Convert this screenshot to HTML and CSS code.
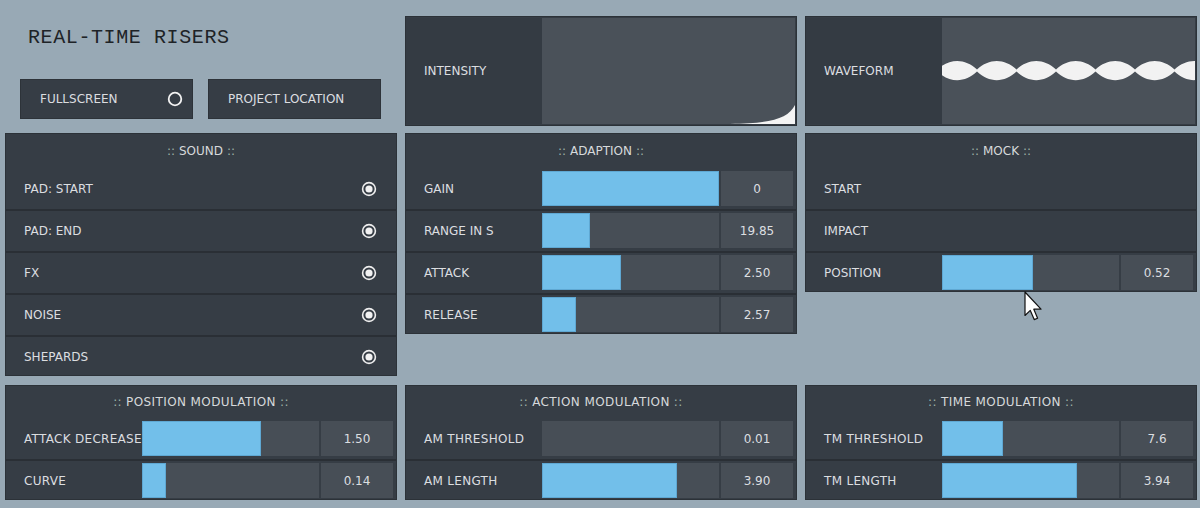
FILE: index.html
```html
<!DOCTYPE html>
<html>
<head>
<meta charset="utf-8">
<link rel="stylesheet" href="styles.css">
</head>
<body>
<div class="app">
  <div class="row-top">
    <div class="brand">
      <h1 class="title">REAL-TIME RISERS</h1>
      <div class="buttons">
        <div class="btn"><span>FULLSCREEN</span>
          <svg class="ring" width="16" height="16" viewBox="0 0 16 16"><circle cx="8" cy="8" r="6.3" fill="none" stroke="#f2f2f2" stroke-width="1.8"/></svg>
        </div>
        <div class="btn"><span>PROJECT LOCATION</span></div>
      </div>
    </div>
    <div class="panel viz">
      <div class="viz-label">INTENSITY</div>
      <div class="viz-graph">
        <svg class="graph-svg" viewBox="0 0 253 106" preserveAspectRatio="none">
          <path d="M188 106 C 228 105.5 246 101 253 87 V106 Z" fill="#f4f4f4"/>
        </svg>
      </div>
    </div>
    <div class="panel viz">
      <div class="viz-label">WAVEFORM</div>
      <div class="viz-graph">
        <svg class="graph-svg" viewBox="0 0 253 106" preserveAspectRatio="none">
          <path d="M-4.5 51.5 C7.5 40 23 40 35 51.5 C47 40 62.5 40 74.5 51.5 C86.5 40 102 40 114 51.5 C126 40 141.5 40 153.5 51.5 C165.5 40 181 40 193 51.5 C205 40 220.5 40 232.5 51.5 C244.5 40 260 40 272 51.5 L272 53.5 C260 65 244.5 65 232.5 53.5 C220.5 65 205 65 193 53.5 C181 65 165.5 65 153.5 53.5 C141.5 65 126 65 114 53.5 C102 65 86.5 65 74.5 53.5 C62.5 65 47 65 35 53.5 C23 65 7.5 65 -4.5 53.5 Z" fill="#f2f2f2"/>
        </svg>
      </div>
    </div>
  </div>

  <div class="row-mid">
    <div class="panel">
      <div class="hdr"><span class="c">::</span> SOUND <span class="c">::</span></div>
      <div class="row"><div class="lbl">PAD: START</div><svg class="radio" width="16" height="16" viewBox="0 0 16 16"><circle cx="8" cy="8" r="6.4" fill="none" stroke="#eeeeee" stroke-width="1.6"/><circle cx="8" cy="8" r="3.6" fill="#f2f2f2"/></svg></div>
      <div class="row"><div class="lbl">PAD: END</div><svg class="radio" width="16" height="16" viewBox="0 0 16 16"><circle cx="8" cy="8" r="6.4" fill="none" stroke="#eeeeee" stroke-width="1.6"/><circle cx="8" cy="8" r="3.6" fill="#f2f2f2"/></svg></div>
      <div class="row"><div class="lbl">FX</div><svg class="radio" width="16" height="16" viewBox="0 0 16 16"><circle cx="8" cy="8" r="6.4" fill="none" stroke="#eeeeee" stroke-width="1.6"/><circle cx="8" cy="8" r="3.6" fill="#f2f2f2"/></svg></div>
      <div class="row"><div class="lbl">NOISE</div><svg class="radio" width="16" height="16" viewBox="0 0 16 16"><circle cx="8" cy="8" r="6.4" fill="none" stroke="#eeeeee" stroke-width="1.6"/><circle cx="8" cy="8" r="3.6" fill="#f2f2f2"/></svg></div>
      <div class="row"><div class="lbl">SHEPARDS</div><svg class="radio" width="16" height="16" viewBox="0 0 16 16"><circle cx="8" cy="8" r="6.4" fill="none" stroke="#eeeeee" stroke-width="1.6"/><circle cx="8" cy="8" r="3.6" fill="#f2f2f2"/></svg></div>
    </div>

    <div class="panel">
      <div class="hdr"><span class="c">::</span> ADAPTION <span class="c">::</span></div>
      <div class="row"><div class="lbl">GAIN</div><div class="slider"><div class="fill" style="width:100%"></div></div><div class="val">0</div></div>
      <div class="row"><div class="lbl">RANGE IN S</div><div class="slider"><div class="fill" style="width:27%"></div></div><div class="val">19.85</div></div>
      <div class="row"><div class="lbl">ATTACK</div><div class="slider"><div class="fill" style="width:44.6%"></div></div><div class="val">2.50</div></div>
      <div class="row"><div class="lbl">RELEASE</div><div class="slider"><div class="fill" style="width:19.2%"></div></div><div class="val">2.57</div></div>
    </div>

    <div class="panel">
      <div class="hdr"><span class="c">::</span> MOCK <span class="c">::</span></div>
      <div class="row"><div class="lbl">START</div></div>
      <div class="row"><div class="lbl">IMPACT</div></div>
      <div class="row"><div class="lbl">POSITION</div><div class="slider"><div class="fill" style="width:51.4%"></div></div><div class="val">0.52</div></div>
    </div>
  </div>

  <div class="row-bot">
    <div class="panel">
      <div class="hdr wide"><span class="c">::</span> POSITION MODULATION <span class="c">::</span></div>
      <div class="row wide"><div class="lbl">ATTACK DECREASE</div><div class="slider"><div class="fill" style="width:67.2%"></div></div><div class="val">1.50</div></div>
      <div class="row wide"><div class="lbl">CURVE</div><div class="slider"><div class="fill" style="width:13.6%"></div></div><div class="val">0.14</div></div>
    </div>
    <div class="panel">
      <div class="hdr wide"><span class="c">::</span> ACTION MODULATION <span class="c">::</span></div>
      <div class="row wide"><div class="lbl">AM THRESHOLD</div><div class="slider"><div class="fill" style="width:0%"></div></div><div class="val">0.01</div></div>
      <div class="row wide"><div class="lbl">AM LENGTH</div><div class="slider"><div class="fill" style="width:76.3%"></div></div><div class="val">3.90</div></div>
    </div>
    <div class="panel">
      <div class="hdr wide"><span class="c">::</span> TIME MODULATION <span class="c">::</span></div>
      <div class="row wide"><div class="lbl">TM THRESHOLD</div><div class="slider"><div class="fill" style="width:34.5%"></div></div><div class="val">7.6</div></div>
      <div class="row wide"><div class="lbl">TM LENGTH</div><div class="slider"><div class="fill" style="width:76.3%"></div></div><div class="val">3.94</div></div>
    </div>
  </div>

  <svg class="cursor" width="20" height="31" viewBox="0 0 20 31">
    <path d="M1 1 L1 24.5 L6.3 19.4 L10.2 28.6 L13.6 27.2 L9.8 18.2 L17 18.2 Z" fill="#ffffff" stroke="#111111" stroke-width="1.2" stroke-linejoin="round"/>
  </svg>
</div>
</body>
</html>
```

FILE: styles.css
```css
* {
  box-sizing: border-box;
}

html, body {
  margin: 0;
  padding: 0;
}

body {
  width: 1200px;
  height: 508px;
  overflow: hidden;
  background: #98a9b5;
  font-family: "DejaVu Sans", "Liberation Sans", sans-serif;
  font-size: 12px;
  color: #dcdee0;
}

.app {
  position: relative;
  padding: 16px 0 0 5px;
  display: flex;
  flex-direction: column;
}

.row-top {
  display: flex;
  gap: 8px;
  height: 110px;
}

.row-mid {
  display: flex;
  gap: 8px;
  align-items: flex-start;
  margin-top: 7px;
}

.row-bot {
  display: flex;
  gap: 8px;
  align-items: flex-start;
  margin-top: 9px;
}

.brand {
  width: 392px;
  flex: none;
}

.title {
  margin: 0;
  padding: 12px 0 0 23px;
  font-family: "Liberation Mono", "DejaVu Sans Mono", monospace;
  font-weight: normal;
  font-size: 20px;
  line-height: 20px;
  letter-spacing: 0.6px;
  color: #1e2327;
}

.buttons {
  display: flex;
  gap: 15px;
  margin-top: 31px;
  padding-left: 15px;
}

.btn {
  width: 173px;
  height: 40px;
  background: #363d45;
  border: 1px solid #2d3339;
  display: flex;
  align-items: center;
  justify-content: space-between;
  padding: 0 9px 0 19px;
}

.panel {
  width: 392px;
  flex: none;
  background: #363d45;
  border: 1px solid #2c3238;
}

.viz {
  height: 110px;
  display: flex;
  padding: 1px 1px 1px 0;
}

.viz-label {
  width: 136px;
  display: flex;
  align-items: center;
  padding-left: 18px;
  background: #343b43;
}

.viz-graph {
  flex: 1;
  background: #4a5159;
  position: relative;
}

.graph-svg {
  display: block;
  width: 100%;
  height: 100%;
}

.hdr {
  height: 33px;
  display: flex;
  align-items: center;
  justify-content: center;
  gap: 4px;
  color: #d6d9db;
}

.hdr.wide {
  height: 31px;
  letter-spacing: 0.4px;
}

.hdr .c {
  color: #9fb3a8;
}

.row {
  display: flex;
  align-items: center;
  height: 42px;
  padding: 2px 3px 3px 0;
  border-top: 2px solid #2a2f35;
}

.hdr + .row {
  border-top-color: transparent;
}

.row:last-child {
  height: 40px;
  padding-bottom: 1px;
}

.lbl {
  width: 136px;
  padding-left: 18px;
  white-space: nowrap;
}

.row.wide .lbl {
  letter-spacing: 0.3px;
}

.row .lbl:only-child,
.row .lbl:first-child:nth-last-child(2) {
  flex: 1;
}

.radio {
  margin-right: 16px;
  flex: none;
}

.slider {
  width: 177px;
  height: 35px;
  background: #474e56;
  flex: none;
}

.fill {
  height: 100%;
  background: #72bfea;
  border: 1px solid #5fa8d3;
}

.fill[style*="width:0%"] {
  border: none;
}

.val {
  width: 72px;
  height: 35px;
  margin-left: 2px;
  background: #474e56;
  display: flex;
  align-items: center;
  justify-content: center;
  flex: none;
}

.cursor {
  position: absolute;
  left: 1024px;
  top: 291px;
}
```
